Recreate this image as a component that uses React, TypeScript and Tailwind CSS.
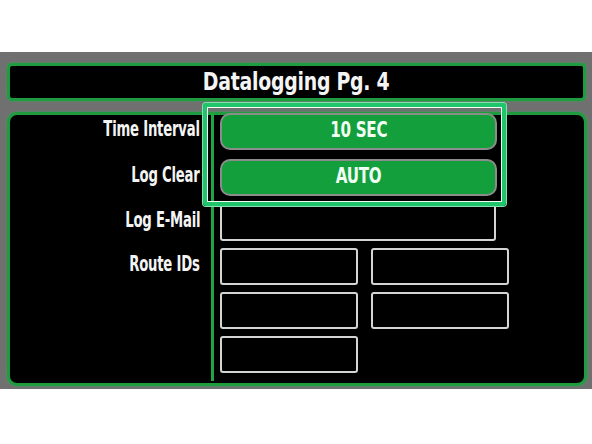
import React from "react";

const font =
  "font-['Liberation_Sans_Narrow','DejaVu_Sans_Condensed','DejaVu_Sans',sans-serif] font-bold";

function Label({ text }: { text: string }) {
  return (
    <div className="h-[37px] flex items-center justify-end">
      <span
        className={`${font} inline-block whitespace-nowrap origin-right scale-x-[0.7] text-[21px] tracking-[-0.3px] text-[#f4f4f4] leading-none -mt-[4px]`}
      >
        {text}
      </span>
    </div>
  );
}

function ValueButton({ value }: { value: string }) {
  return (
    <div className="w-[277px] h-[37px] rounded-[10px] border-2 border-[#8c8c8c] bg-[#13a03c] flex items-center justify-center">
      <span
        className={`${font} inline-block whitespace-nowrap scale-x-[0.8] text-[21px] tracking-[-0.3px] text-[#f2fff4] leading-none -mt-[2px]`}
      >
        {value}
      </span>
    </div>
  );
}

function Field({ wide }: { wide?: boolean }) {
  return (
    <div
      className={`${wide ? "w-[276px]" : "w-[138px]"} h-[37px] rounded-[3px] border-2 border-[#d4d4d4] bg-black`}
    />
  );
}

export default function App() {
  return (
    <div className="w-[592px] h-[444px] bg-white overflow-hidden">
      <div className="h-[52px]" />
      <div className="relative h-[337px] bg-[#707070] pl-[7px] pt-[11px]">
        <div className="w-[579px] h-[38px] rounded-[5px] border-[3px] border-[#1f9c40] bg-black flex items-center justify-center shadow-[0_0_2px_#2bb453]">
          <span
            className={`${font} inline-block whitespace-nowrap scale-x-[0.84] text-[25px] tracking-[-0.3px] text-[#f4f4f4] leading-none -mt-[2px]`}
          >
            Datalogging Pg. 4
          </span>
        </div>

        <div className="mt-[11px] w-[580px] h-[274px] rounded-[10px] border-[3px] border-[#1f9c40] bg-black flex shadow-[0_0_2px_#2bb453]">
          <div className="w-[204px] h-full border-r-[3px] border-[#21a444] pr-[11px] -mt-[2px] flex flex-col">
            <Label text="Time Interval" />
            <div className="h-[9px]" />
            <Label text="Log Clear" />
            <div className="h-[8px]" />
            <Label text="Log E-Mail" />
            <div className="h-[7px]" />
            <Label text="Route IDs" />
          </div>
          <div className="flex-1 pl-[6px] -mt-[2px] flex flex-col">
            <ValueButton value="10 SEC" />
            <div className="h-[9px]" />
            <ValueButton value="AUTO" />
            <div className="h-[8px]" />
            <Field wide />
            <div className="h-[7px]" />
            <div className="grid grid-cols-[138px_138px] gap-x-[13px] gap-y-[7px]">
              <Field />
              <Field />
              <Field />
              <Field />
              <Field />
            </div>
          </div>
        </div>

        {/* focus highlight around the selected settings */}
        <div className="absolute left-[203px] top-[51px] w-[303px] h-[103px] rounded-[3px] border-4 border-[#1fc46b] shadow-[0_0_0_1px_#86dfb0,inset_0_0_0_1px_#f4fff8] pointer-events-none" />
      </div>
    </div>
  );
}
